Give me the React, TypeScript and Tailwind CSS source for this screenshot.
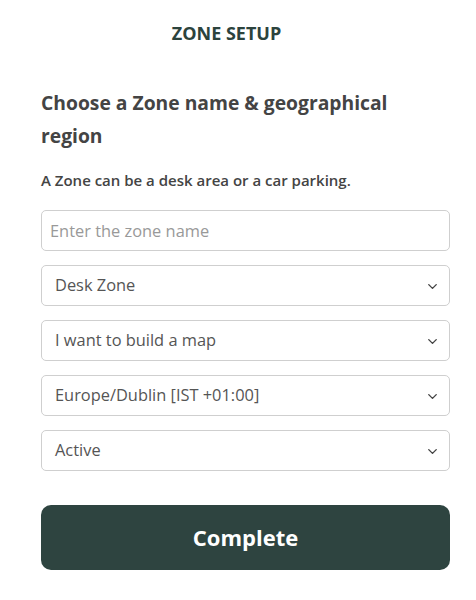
import { ChevronDown } from 'lucide-react';

const selects = [
  'Desk Zone',
  'I want to build a map',
  'Europe/Dublin [IST +01:00]',
  'Active',
];

function SelectBox({ value }: { value: string }) {
  return (
    <div className="relative h-[41px] w-full rounded-[5px] border border-[#cfcfcf] bg-white">
      <div className="flex h-full items-center pl-[13px] text-[16.4px] text-[#555]">{value}</div>
      <ChevronDown
        className="absolute right-[9px] top-[13px] text-[#444]"
        size={15}
        strokeWidth={2.25}
      />
    </div>
  );
}

export default function App() {
  return (
    <div
      className="min-h-screen bg-white"
      style={{ fontFamily: '"Open Sans", "Liberation Sans", sans-serif' }}
    >
      <div className="w-[453px] pt-[21px] text-center text-[18px] font-bold leading-[24px] text-[#2c433d]">
        ZONE SETUP
      </div>

      <div className="ml-[41px] mt-[41px] w-[409px]">
        <h1 className="text-[19.3px] font-bold leading-[33px] text-[#444]">
          Choose a Zone name &amp; geographical region
        </h1>
        <p className="mt-[18px] text-[15px] font-semibold leading-[20px] text-[#444]">
          A Zone can be a desk area or a car parking.
        </p>

        <div className="mt-[20px] flex flex-col gap-[14px]">
          <input
            className="h-[41px] w-full rounded-[5px] border border-[#cfcfcf] px-[8px] text-[16.4px] text-[#555] outline-none placeholder:text-[#999]"
            placeholder="Enter the zone name"
          />
          {selects.map((s) => (
            <SelectBox key={s} value={s} />
          ))}
        </div>

        <button className="mt-[34px] h-[65px] w-full rounded-[10px] bg-[#2e4440] text-[22px] font-bold text-white">
          Complete
        </button>
      </div>
    </div>
  );
}
